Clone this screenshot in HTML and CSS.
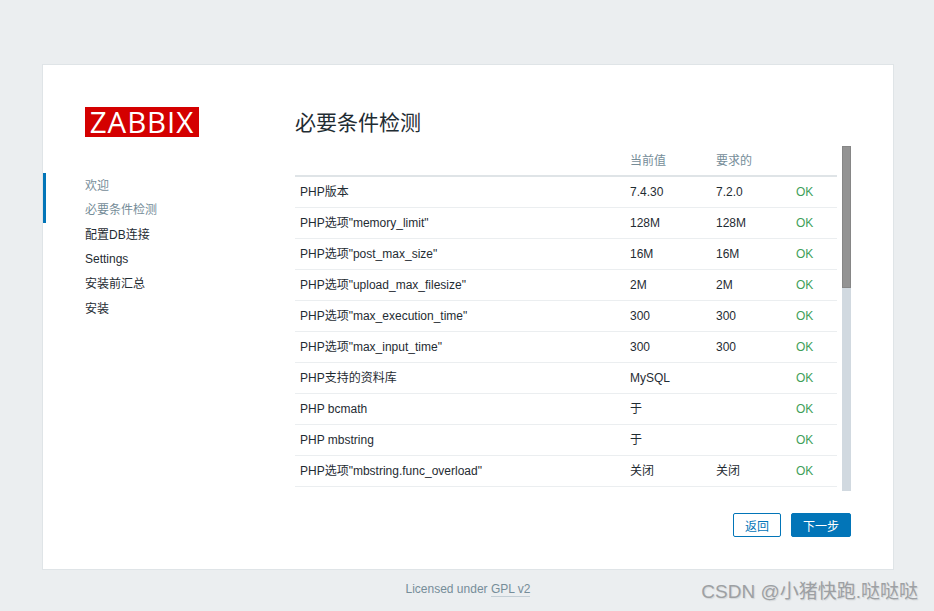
FILE: index.html
```html
<!DOCTYPE html>
<html lang="en">

<head>
    <meta charset="UTF-8">
    <title>Zabbix - 必要条件检测</title>
    <link rel="stylesheet" href="styles.css">
</head>

<body>
    <div class="setup-card">
        <div class="sidebar">
            <div class="logo">ZABBIX</div>
            <ul class="steps">
                <li class="done">欢迎</li>
                <li class="done">必要条件检测</li>
                <li>配置DB连接</li>
                <li>Settings</li>
                <li>安装前汇总</li>
                <li>安装</li>
            </ul>
        </div>

        <div class="content">
            <h1>必要条件检测</h1>
            <div class="check-box">
                <div class="check-scroll">
                    <table class="check-table">
                        <thead>
                            <tr>
                                <th class="col-name"></th>
                                <th class="col-current">当前值</th>
                                <th class="col-required">要求的</th>
                                <th></th>
                            </tr>
                        </thead>
                        <tbody>
                            <tr><td>PHP版本</td><td>7.4.30</td><td>7.2.0</td><td class="ok">OK</td></tr>
                            <tr><td>PHP选项"memory_limit"</td><td>128M</td><td>128M</td><td class="ok">OK</td></tr>
                            <tr><td>PHP选项"post_max_size"</td><td>16M</td><td>16M</td><td class="ok">OK</td></tr>
                            <tr><td>PHP选项"upload_max_filesize"</td><td>2M</td><td>2M</td><td class="ok">OK</td></tr>
                            <tr><td>PHP选项"max_execution_time"</td><td>300</td><td>300</td><td class="ok">OK</td></tr>
                            <tr><td>PHP选项"max_input_time"</td><td>300</td><td>300</td><td class="ok">OK</td></tr>
                            <tr><td>PHP支持的资料库</td><td>MySQL</td><td></td><td class="ok">OK</td></tr>
                            <tr><td>PHP bcmath</td><td>于</td><td></td><td class="ok">OK</td></tr>
                            <tr><td>PHP mbstring</td><td>于</td><td></td><td class="ok">OK</td></tr>
                            <tr><td>PHP选项"mbstring.func_overload"</td><td>关闭</td><td>关闭</td><td class="ok">OK</td></tr>
                        </tbody>
                    </table>
                </div>
                <div class="scroll-track">
                    <div class="scroll-thumb"></div>
                </div>
            </div>
            <div class="buttons">
                <button class="btn-alt">返回</button>
                <button class="btn-next">下一步</button>
            </div>
        </div>
    </div>

    <div class="footer">Licensed under <a href="#">GPL v2</a></div>
    <div class="watermark">CSDN @小猪快跑.哒哒哒</div>
</body>

</html>
```

FILE: styles.css
```css
body {
    font-family: "Liberation Sans", "Noto Sans CJK SC", sans-serif;
    font-size: 12px;
    line-height: 14px;
    background-color: #ebeef0;
    color: #1f2c33;
    margin: 0;
    padding: 0;
    height: 611px;
    overflow: hidden;
    position: relative;
}

.setup-card {
    display: flex;
    box-sizing: border-box;
    width: 852px;
    height: 506px;
    margin: 64px 0 0 42px;
    background-color: #fff;
    border: 1px solid #dfe4e7;
}

.sidebar {
    width: 252px;
    padding-top: 42px;
}

.logo {
    width: 114px;
    height: 30px;
    margin-left: 42px;
    background-color: #d40000;
    color: #fff;
    font-family: "Open Sans", sans-serif;
    font-size: 29.5px;
    line-height: 30px;
    letter-spacing: 0.9px;
    text-align: center;
}

.steps {
    list-style: none;
    margin: 36px 0 0;
    padding: 0.6px 0 0;
    position: relative;
}

/* progress bar sits on the card edge */
.steps::before {
    content: "";
    position: absolute;
    left: 0;
    top: 0;
    width: 3px;
    height: 50px;
    background-color: #0275b8;
}

.steps li {
    height: 24.6px;
    line-height: 24.6px;
    padding-left: 42px;
}

.steps li.done {
    color: #768d99;
}

.content {
    flex: 1;
    padding-top: 43px;
}

h1 {
    font-size: 21px;
    font-weight: 400;
    line-height: 30px;
    margin: 0;
    height: 38px;
}

.check-box {
    display: flex;
    width: 556px;
    height: 345px;
}

.check-scroll {
    width: 542px;
    overflow: hidden;
}

.check-table {
    width: 542px;
    table-layout: fixed;
    border-collapse: collapse;
}

.check-table th {
    height: 29px;
    padding: 0;
    font-weight: 400;
    text-align: left;
    color: #768d99;
    border-bottom: 2px solid #dfe4e7;
}

.col-name {
    width: 335px;
}

.col-current {
    width: 86px;
}

.col-required {
    width: 80px;
}

.check-table td {
    height: 30px;
    padding: 0;
    border-bottom: 1px solid #ebeef0;
}

.check-table td:first-child {
    padding-left: 5px;
}

.check-table .ok {
    color: #3f9f5a;
}

.scroll-track {
    width: 9px;
    margin-left: 5px;
    background-color: #d1d9e0;
}

.scroll-thumb {
    box-sizing: border-box;
    height: 142px;
    background-color: #939393;
    border: 1px solid #868686;
}

.buttons {
    display: flex;
    justify-content: flex-end;
    gap: 10px;
    width: 556px;
    margin-top: 22px;
}

.buttons button {
    box-sizing: border-box;
    height: 24px;
    padding: 0;
    border: 1px solid #0275b8;
    border-radius: 2px;
    font-family: inherit;
    font-size: 12px;
    cursor: pointer;
}

.btn-alt {
    width: 48px;
    background-color: #fff;
    color: #0275b8;
}

.btn-next {
    width: 60px;
    background-color: #0275b8;
    color: #fff;
}

.footer {
    margin-top: 12px;
    padding-left: 2px;
    text-align: center;
    color: #768d99;
}

.footer a {
    color: #768d99;
    text-decoration: none;
    border-bottom: 1px solid #c3ced5;
}

.watermark {
    position: absolute;
    right: 16px;
    top: 580px;
    font-size: 19px;
    line-height: 24px;
    color: #9da0a3;
    text-shadow: 1px 1px 1px #d3d6d8;
}
```
